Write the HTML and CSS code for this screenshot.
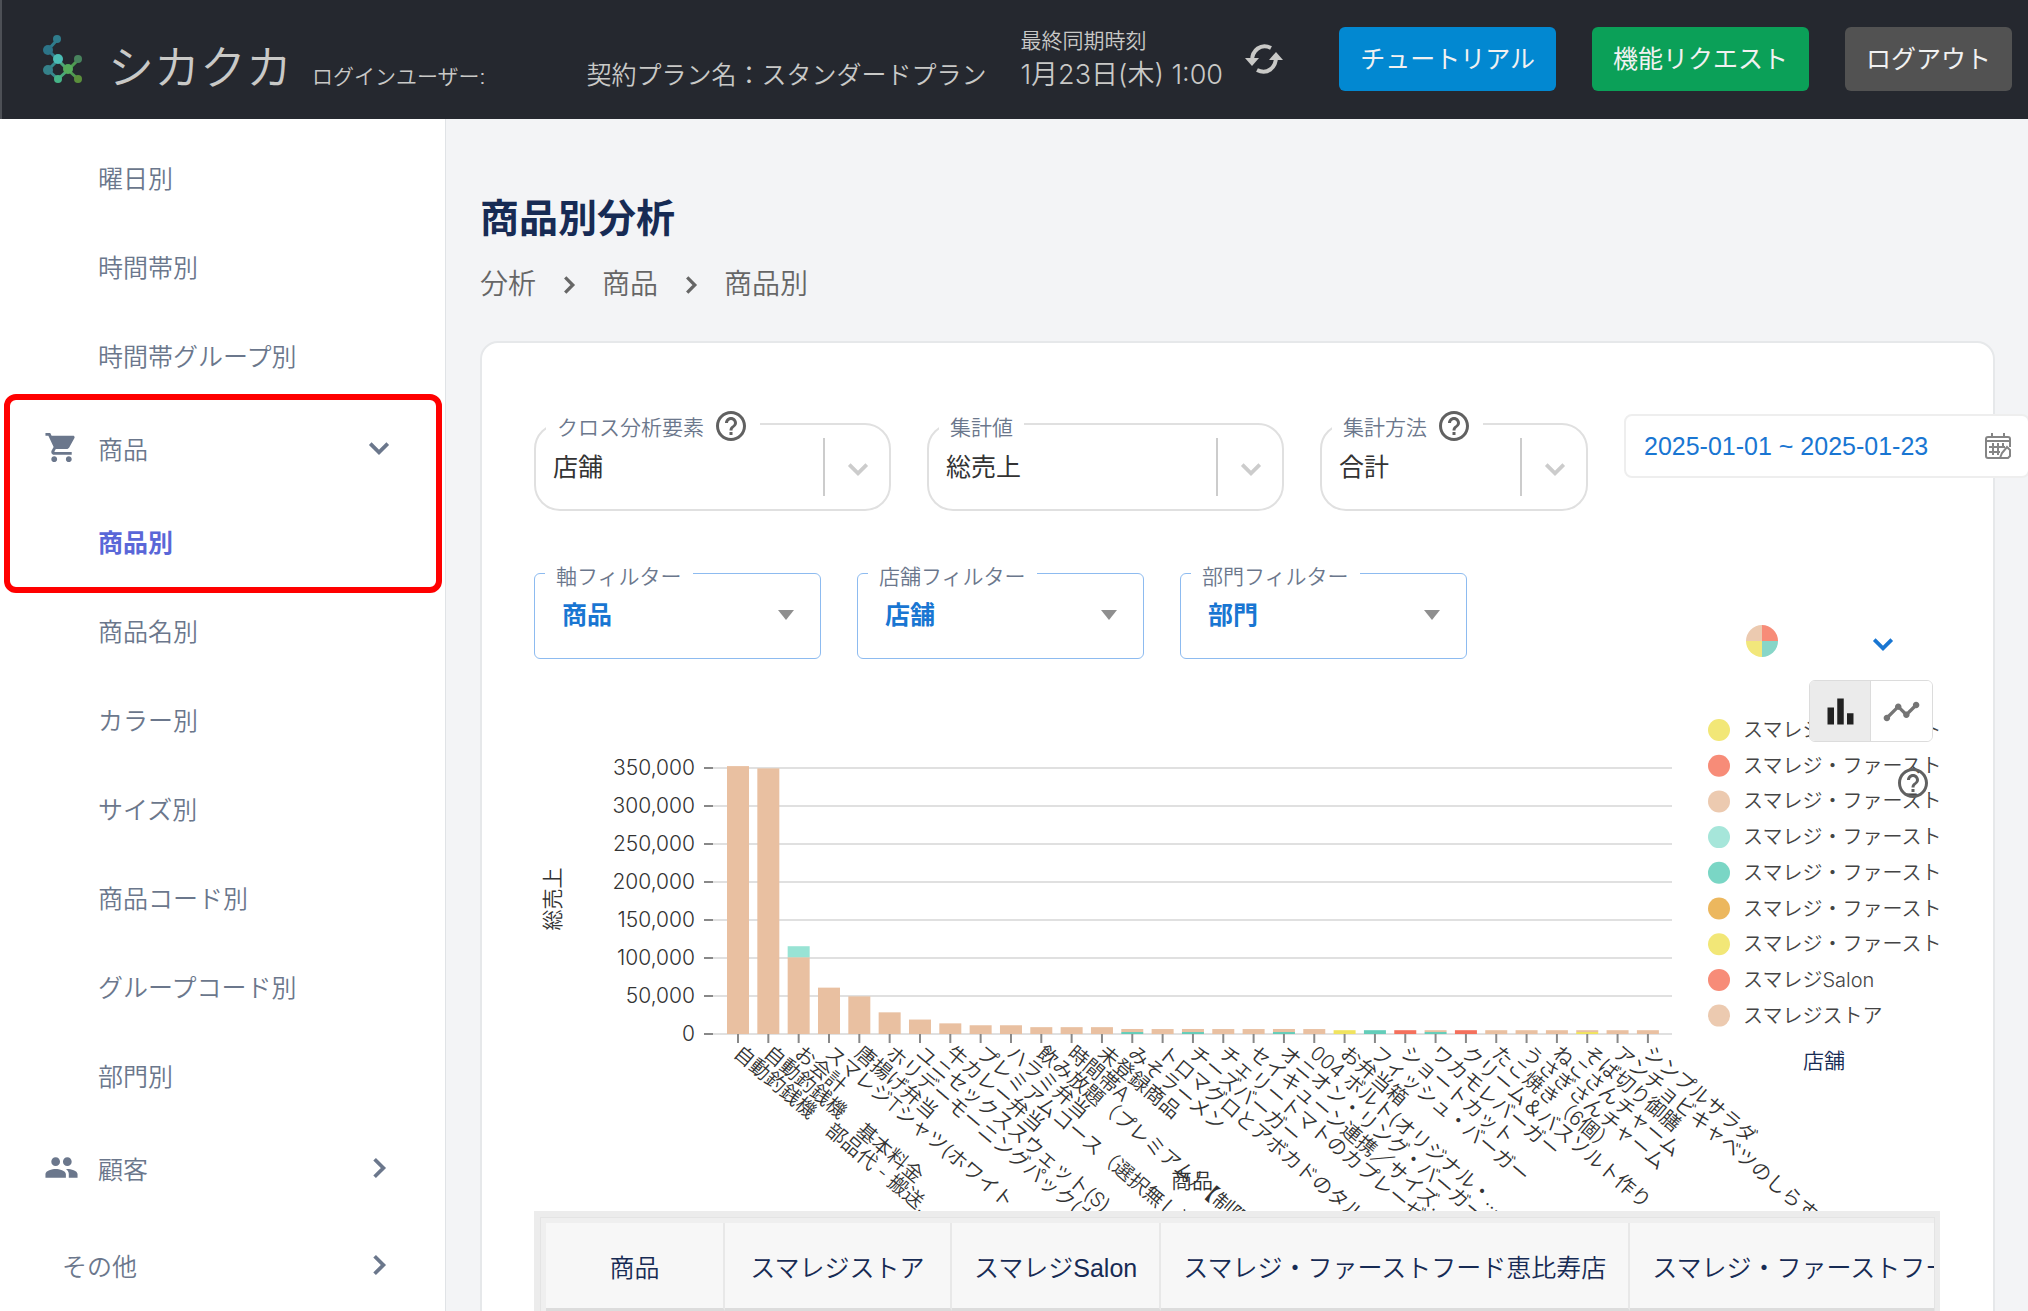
FILE: index.html
```html
<!DOCTYPE html>
<html lang="ja">
<head>
    <meta charset="UTF-8" />
    <meta name="viewport" content="width=device-width, initial-scale=1.0" />
    <title>商品別分析 | シカクカ</title>
    <link rel="stylesheet" href="styles.css">
</head>
<body>
    <!-- Shared icons -->
    <svg class="icon-defs" width="0" height="0" aria-hidden="true">
        <symbol id="icon-help" viewBox="0 0 24 24">
            <path d="M11 18h2v-2h-2v2zm1-16C6.48 2 2 6.48 2 12s4.48 10 10 10 10-4.48 10-10S17.52 2 12 2zm0 18c-4.41 0-8-3.59-8-8s3.59-8 8-8 8 3.59 8 8-3.59 8-8 8zm0-14c-2.21 0-4 1.79-4 4h2c0-1.1.9-2 2-2s2 .9 2 2c0 2-3 1.75-3 5h2c0-2.25 3-2.5 3-5 0-2.21-1.79-4-4-4z"/>
        </symbol>
        <symbol id="icon-down" viewBox="0 0 24 24">
            <path d="M5 8.5l7 7 7-7" fill="none" stroke="currentColor" stroke-width="3"/>
        </symbol>
        <symbol id="icon-right" viewBox="0 0 24 24">
            <path d="M8.5 5l7 7-7 7" fill="none" stroke="currentColor" stroke-width="3"/>
        </symbol>
    </svg>

    <header class="header">
        <div class="header-info">
            <a class="brand" href="#">
                <svg class="brand-logo" viewBox="0 0 40 50" aria-hidden="true">
                    <g fill="none" stroke-width="3">
                        <path d="M15 6L6 16l10 10" stroke="#2f7c8c"/>
                        <path d="M16 26L6 36l10 9" stroke="#378a8d"/>
                        <path d="M16 26l10 10-10 9" stroke="#4aa779"/>
                        <path d="M36 26L26 36l10 9" stroke="#4f9a52"/>
                    </g>
                    <circle cx="15" cy="5" r="4" fill="#2f7c8c"/>
                    <circle cx="6" cy="16" r="5" fill="#2c7488"/>
                    <circle cx="16" cy="25" r="5" fill="#4bbdb5"/>
                    <circle cx="6" cy="36" r="5" fill="#35818a"/>
                    <circle cx="26" cy="35" r="5" fill="#55ab5b"/>
                    <circle cx="36" cy="25" r="4" fill="#48835d"/>
                    <circle cx="36" cy="45" r="4" fill="#5a8f3c"/>
                    <circle cx="16" cy="45" r="4" fill="#46b487"/>
                </svg>
                <span>シカクカ</span>
            </a>
            <p class="login-user">ログインユーザー:</p>
            <p class="plan">契約プラン名：スタンダードプラン</p>
            <div class="sync">
                <p class="sync-label">最終同期時刻</p>
                <p class="sync-time">1月23日(木) 1:00</p>
            </div>
        </div>
        <button class="sync-btn" type="button" aria-label="同期">
            <svg width="38" height="30" viewBox="0 0 38 30" aria-hidden="true">
                <path d="M26 4C16-1 7 6 7 17" fill="none" stroke="currentColor" stroke-width="4"/>
                <path d="M0 14h14l-7 8z" fill="currentColor"/>
                <path d="M12 26c10 5 19-2 19-13" fill="none" stroke="currentColor" stroke-width="4"/>
                <path d="M24 16h14l-7-8z" fill="currentColor"/>
            </svg>
        </button>
        <div class="header-buttons">
            <button class="header-btn tutorial" type="button">チュートリアル</button>
            <button class="header-btn request" type="button">機能リクエスト</button>
            <button class="header-btn logout" type="button">ログアウト</button>
        </div>
    </header>

    <div class="layout">
        <nav class="sidebar">
            <a class="nav-item" href="#">曜日別</a>
            <a class="nav-item" href="#">時間帯別</a>
            <a class="nav-item" href="#">時間帯グループ別</a>
            <div class="nav-highlight">
                <a class="nav-group" href="#">
                    <svg class="nav-icon" viewBox="0 0 24 24" aria-hidden="true"><path d="M7 18c-1.1 0-1.99.9-1.99 2S5.9 22 7 22s2-.9 2-2-.9-2-2-2zM1 2v2h2l3.6 7.59-1.35 2.45c-.16.28-.25.61-.25.96 0 1.1.9 2 2 2h12v-2H7.42c-.14 0-.25-.11-.25-.25l.03-.12.9-1.63h7.45c.75 0 1.41-.41 1.75-1.03l3.58-6.49c.08-.14.12-.31.12-.48 0-.55-.45-1-1-1H5.21l-.94-2H1zm16 16c-1.1 0-1.99.9-1.99 2s.89 2 1.99 2 2-.9 2-2-.9-2-2-2z"/></svg>
                    <span>商品</span>
                    <svg class="nav-arrow"><use href="#icon-down"/></svg>
                </a>
                <a class="nav-item active" href="#">商品別</a>
            </div>
            <a class="nav-item" href="#">商品名別</a>
            <a class="nav-item" href="#">カラー別</a>
            <a class="nav-item" href="#">サイズ別</a>
            <a class="nav-item" href="#">商品コード別</a>
            <a class="nav-item" href="#">グループコード別</a>
            <a class="nav-item" href="#">部門別</a>
            <a class="nav-group" href="#">
                <svg class="nav-icon" viewBox="0 0 24 24" aria-hidden="true"><path d="M16 11c1.66 0 2.99-1.34 2.99-3S17.66 5 16 5c-1.66 0-3 1.34-3 3s1.34 3 3 3zm-8 0c1.66 0 2.99-1.34 2.99-3S9.66 5 8 5C6.34 5 5 6.34 5 8s1.34 3 3 3zm0 2c-2.33 0-7 1.17-7 3.5V19h14v-2.5c0-2.33-4.67-3.5-7-3.5zm8 0c-.29 0-.62.02-.97.05 1.16.84 1.97 1.97 1.97 3.45V19h6v-2.5c0-2.33-4.67-3.5-7-3.5z"/></svg>
                <span>顧客</span>
                <svg class="nav-arrow"><use href="#icon-right"/></svg>
            </a>
            <a class="nav-group no-icon" href="#">
                <span>その他</span>
                <svg class="nav-arrow"><use href="#icon-right"/></svg>
            </a>
        </nav>

        <main class="main">
            <h1 class="page-title">商品別分析</h1>
            <div class="breadcrumb">
                <a href="#">分析</a>
                <svg class="crumb-arrow"><use href="#icon-right"/></svg>
                <a href="#">商品</a>
                <svg class="crumb-arrow"><use href="#icon-right"/></svg>
                <span>商品別</span>
            </div>

            <section class="card">
                <div class="select-row">
                    <div class="field">
                        <label class="field-label" for="cross">クロス分析要素 <svg class="help"><use href="#icon-help"/></svg></label>
                        <select id="cross"><option>店舗</option></select>
                        <svg class="field-arrow"><use href="#icon-down"/></svg>
                    </div>
                    <div class="field">
                        <label class="field-label" for="value">集計値</label>
                        <select id="value"><option>総売上</option></select>
                        <svg class="field-arrow"><use href="#icon-down"/></svg>
                    </div>
                    <div class="field narrow">
                        <label class="field-label" for="method">集計方法 <svg class="help"><use href="#icon-help"/></svg></label>
                        <select id="method"><option>合計</option></select>
                        <svg class="field-arrow"><use href="#icon-down"/></svg>
                    </div>
                    <div class="date-field">
                        <input type="text" aria-label="期間" value="2025-01-01 ~ 2025-01-23">
                        <svg class="calendar" viewBox="0 0 28 28" aria-hidden="true">
                            <path d="M16 26H4a2 2 0 0 1-2-2V7a2 2 0 0 1 2-2h20a2 2 0 0 1 2 2v8M2 9h24M8 1v5M20 1v5"/>
                            <path d="M5 15h16M5 20h11M9 11v12M14 11v12M19 11v5"/>
                            <path d="M16 26l2-5 5-6 3 3v6l-2 2z"/>
                        </svg>
                    </div>
                </div>

                <div class="filter-row">
                    <div class="filter">
                        <label class="filter-label" for="axis-filter">軸フィルター</label>
                        <select id="axis-filter"><option>商品</option></select>
                    </div>
                    <div class="filter">
                        <label class="filter-label" for="store-filter">店舗フィルター</label>
                        <select id="store-filter"><option>店舗</option></select>
                    </div>
                    <div class="filter">
                        <label class="filter-label" for="dept-filter">部門フィルター</label>
                        <select id="dept-filter"><option>部門</option></select>
                    </div>
                    <button class="palette-btn" type="button" aria-label="配色">
                        <svg width="32" height="32" viewBox="0 0 32 32" aria-hidden="true">
                            <path d="M16 16V0a16 16 0 0 1 16 16z" fill="#f78c78"/>
                            <path d="M16 16h16a16 16 0 0 1-16 16z" fill="#87d6c8"/>
                            <path d="M16 16v16A16 16 0 0 1 0 16z" fill="#f2e77b"/>
                            <path d="M16 16H0A16 16 0 0 1 16 0z" fill="#eccab0"/>
                        </svg>
                        <svg class="palette-arrow"><use href="#icon-down"/></svg>
                    </button>
                </div>

                <div class="chart">
                    <svg id="chart-svg" viewBox="0 0 1406 531" role="img" aria-label="商品別の総売上"></svg>
                    <div class="chart-toggle">
                        <button class="toggle-btn selected" type="button" aria-label="棒グラフ">
                            <svg viewBox="0 0 24 24" aria-hidden="true"><path d="M4 9.500h4V20H4zM10 4h4v16h-4zM16 13h4v7h-4z"/></svg>
                        </button>
                        <button class="toggle-btn" type="button" aria-label="折れ線グラフ">
                            <svg viewBox="0 0 24 24" aria-hidden="true"><path d="M23 8c0 1.100-.9 2-2 2-.18 0-.35-.02-.51-.07l-3.560 3.550c.05.16.07.34.07.52 0 1.100-.9 2-2 2s-2-.9-2-2c0-.18.02-.36.07-.52l-2.550-2.550c-.16.05-.34.07-.52.07s-.36-.02-.52-.07l-4.550 4.560c.05.16.07.33.07.51 0 1.100-.9 2-2 2s-2-.9-2-2 .9-2 2-2c.18 0 .35.02.51.07l4.560-4.550C8.020 9.360 8 9.180 8 9c0-1.100.9-2 2-2s2 .9 2 2c0 .18-.02.36-.07.52l2.550 2.550c.16-.05.34-.07.52-.07s.36.02.52.07l3.550-3.560C19.020 8.350 19 8.180 19 8c0-1.100.9-2 2-2s2 .9 2 2z"/></svg>
                        </button>
                    </div>
                    <svg class="help chart-help"><use href="#icon-help"/></svg>
                </div>

                <div class="table-wrap">
                    <div class="table-scroll">
                        <table class="data-table">
                            <thead>
                                <tr>
                                    <th class="col-name">商品</th>
                                    <th class="col-store">スマレジストア</th>
                                    <th>スマレジSalon</th>
                                    <th>スマレジ・ファーストフード恵比寿店</th>
                                    <th>スマレジ・ファーストフード渋谷店</th>
                                </tr>
                            </thead>
                        </table>
                    </div>
                </div>
            </section>
        </main>
    </div>

    <script src="chart.js"></script>
</body>
</html>
```

FILE: styles.css
```css
* {
    box-sizing: border-box;
}
body {
    margin: 0;
    height: 100vh;
    display: flex;
    flex-direction: column;
    overflow: hidden;
    font-family: "Liberation Sans", "Noto Sans CJK JP", sans-serif;
    font-size: 25px;
    color: #172b54;
    background: #f3f4f6;
}
p, h1 {
    margin: 0;
}
a {
    color: inherit;
    text-decoration: none;
}
button, select, input {
    font: inherit;
    cursor: pointer;
}
svg {
    flex-shrink: 0;
    fill: currentColor;
}
.icon-defs {
    position: absolute;
}

/* Header */
.header {
    flex-shrink: 0;
    height: 119px;
    display: flex;
    align-items: center;
    padding: 0 16px 2px 40px;
    border-left: 2px solid #4d5056;
    background: #25282f;
    color: #c9c9c7;
    white-space: nowrap;
}
.header-info {
    display: flex;
    align-items: last baseline;
    font-weight: 350;
    line-height: 34px;
}
.brand {
    display: flex;
    align-items: center;
    gap: 26px;
    font-size: 46px;
}
.brand-logo {
    width: 40px;
    height: 50px;
    margin-top: -18px;
}
.login-user {
    margin-left: 20px;
    font-size: 21px;
}
.plan {
    margin-left: 101px;
}
.sync {
    margin-left: 34px;
}
.sync-label {
    font-size: 21px;
}
.sync-time {
    font-family: Inter, "Noto Sans CJK JP", sans-serif;
    font-size: 27px;
}
.sync-btn {
    margin-left: 22px;
    padding: 0;
    border: 0;
    background: none;
    color: #c9c9c7;
    display: flex;
}
.header-buttons {
    margin-left: auto;
    display: flex;
    gap: 36px;
}
.header-btn {
    height: 64px;
    padding: 0 21px 4px;
    border: 0;
    border-radius: 6px;
    color: #f1f1f1;
}
.tutorial {
    background: #0288d1;
}
.request {
    background: #0ba058;
}
.logout {
    background: #525252;
}

.layout {
    flex: 1;
    min-height: 0;
    display: flex;
}

/* Sidebar */
.sidebar {
    width: 446px;
    flex-shrink: 0;
    padding-top: 13px;
    overflow: hidden;
    border-right: 1px solid #e0e3e6;
    background: #fff;
    color: #6b778c;
    font-weight: 350;
}
.nav-item {
    height: 89px;
    display: flex;
    align-items: center;
    padding-left: 98px;
}
.nav-item.active {
    color: #5a67d8;
    font-weight: 700;
}
.nav-group {
    height: 97px;
    display: flex;
    align-items: center;
    padding: 0 51px 0 44px;
}
.nav-icon {
    width: 35px;
    height: 35px;
    margin-right: 19px;
}
.nav-group.no-icon {
    padding-left: 62px;
}
.nav-arrow {
    width: 30px;
    height: 30px;
    margin-left: auto;
}
.nav-highlight {
    position: relative;
}
.nav-highlight::after {
    content: "";
    position: absolute;
    inset: -5px 3px -8px 4px;
    border: 6px solid #f00;
    border-radius: 12px;
    pointer-events: none;
}

/* Main */
.main {
    flex: 1;
    min-width: 0;
    overflow: hidden;
    padding: 75px 33px 0 34px;
}
.page-title {
    font-size: 39px;
    line-height: 50px;
    font-weight: 700;
}
.breadcrumb {
    display: flex;
    align-items: center;
    gap: 18px;
    margin: 21px 0 36px;
    font-size: 28px;
    font-weight: 350;
    line-height: 40px;
    color: #666;
}
.crumb-arrow {
    width: 30px;
    height: 26px;
}
.card {
    padding: 71px 53px 71px 52px;
    border: 2px solid #e6e8ea;
    border-radius: 18px;
    background: #fff;
}

.select-row {
    display: flex;
    align-items: flex-start;
    gap: 36px;
}
.field {
    position: relative;
    flex-shrink: 0;
    width: 357px;
    height: 88px;
    margin-top: 9px;
    border: 2px solid #e0e0e0;
    border-radius: 26px;
}
.field.narrow {
    width: 268px;
}
.field-label, .filter-label {
    position: absolute;
    top: -11px;
    left: 10px;
    display: flex;
    align-items: center;
    gap: 9px;
    height: 24px;
    padding: 0 11px;
    background: #fff;
    font-size: 21px;
    font-weight: 350;
    color: #6b778c;
}
.help {
    width: 36px;
    height: 36px;
    color: #616161;
}
.field select {
    width: 100%;
    height: 100%;
    padding: 0 66px 0 17px;
    border: 0;
    background: none;
    appearance: none;
    color: #333;
}
.field::after {
    content: "";
    position: absolute;
    top: 13px;
    right: 64px;
    width: 2px;
    height: 58px;
    background: #ccc;
}
.field-arrow {
    position: absolute;
    top: 29px;
    right: 16px;
    width: 30px;
    height: 30px;
    color: #ccc;
    pointer-events: none;
}
.date-field {
    flex-shrink: 0;
    width: 406px;
    height: 64px;
    display: flex;
    align-items: center;
    justify-content: space-between;
    padding: 0 16px 0 18px;
    border: 2px solid #eee;
    border-radius: 8px;
    background: #fff;
    color: #858585;
}
.date-field input {
    width: 300px;
    padding: 0;
    border: 0;
    background: none;
    color: #1976d2;
}
.calendar {
    width: 28px;
    height: 28px;
    fill: none;
    stroke: currentColor;
    stroke-width: 2;
}

.filter-row {
    display: flex;
    gap: 36px;
    margin-top: 62px;
}
.filter {
    position: relative;
    width: 287px;
    height: 86px;
    border: 1px solid #8dbbf0;
    border-radius: 6px;
}
.filter::after {
    content: "";
    position: absolute;
    top: 36px;
    right: 26px;
    border: 8px solid transparent;
    border-top: 10px solid #8f8f8f;
    border-bottom: 0;
    pointer-events: none;
}
.filter select {
    width: 100%;
    height: 82px;
    padding: 0 60px 0 27px;
    border: 0;
    background: none;
    appearance: none;
    color: #1976d2;
    font-weight: 700;
}
.palette-btn {
    display: flex;
    align-items: center;
    gap: 90px;
    margin-left: auto;
    padding: 50px 42px 0 0;
    border: 0;
    background: none;
    color: #1976d2;
}
.palette-arrow {
    width: 30px;
    height: 30px;
    margin-top: 6px;
}

/* Chart */
.chart {
    position: relative;
    margin-top: 21px;
}
#chart-svg {
    display: block;
    width: 100%;
    font-family: Inter, "Noto Sans CJK JP", sans-serif;
    font-weight: 350;
}
.grid-line {
    stroke: #e0e0e0;
    stroke-width: 2;
}
.tick {
    stroke: #888;
    stroke-width: 2;
}
.axis-value {
    font-size: 21px;
    fill: #333;
}
.axis-label {
    font-size: 20px;
    fill: #333;
}
.legend-label {
    font-size: 20px;
    fill: #444;
}
.axis-title {
    font-size: 21px;
    fill: #333;
}
.legend-title {
    font-size: 21px;
    fill: #172b54;
}
.chart-toggle {
    position: absolute;
    top: 0;
    right: 7px;
    display: flex;
    border: 1px solid #dcdcdc;
    border-radius: 6px;
    overflow: hidden;
    background: #fff;
}
.toggle-btn {
    width: 61px;
    height: 60px;
    padding: 11px;
    border: 0;
    background: #fff;
    color: #757575;
}
.toggle-btn.selected {
    background: #ebebeb;
    border-right: 1px solid #dcdcdc;
    color: #222;
}
.toggle-btn svg {
    display: block;
    width: 39px;
    height: 39px;
}
.chart-help {
    position: absolute;
    top: 85px;
    right: 9px;
}

/* Table */
.table-wrap {
    padding: 6px 5px 6px 6px;
    background: #ececec;
}
.table-scroll {
    overflow: hidden;
    border: 1px solid #e4e4e4;
}
.data-table {
    border: 5px solid #efefef;
    border-right: 0;
    border-spacing: 0;
    background: #f7f7f7;
}
.data-table th {
    height: 88px;
    padding: 0 22px;
    border-right: 2px solid #e8e8e8;
    border-bottom: 3px solid #dcdcdc;
    font-weight: 350;
    white-space: nowrap;
}
.data-table .col-name {
    min-width: 179px;
}
.data-table .col-store {
    min-width: 227px;
}
```

FILE: chart.js
```js
const COLORS = {
    tan: '#e9c0a1',
    mint: '#98e3d4',
    teal: '#63cdb9',
    yellow: '#f0e35f',
    red: '#f4705c'
};

// [label, [color, value], ...] stacked from the bottom
const ITEMS = [
    ['自動釣銭機　部品代 - 搬送…', ['tan', 352500]],
    ['自動釣銭機　基本料金', ['tan', 349500]],
    ['お会計', ['tan', 101000], ['mint', 14500]],
    ['スマレジTシャツ(ホワイト', ['tan', 61000]],
    ['唐揚げ弁当', ['tan', 49500]],
    ['ホリデーモーニングパック(カ', ['tan', 28500]],
    ['ユニセックススウェット(S)', ['tan', 19000]],
    ['牛カレー弁当', ['tan', 14000]],
    ['プレミアムコース（選択無し）', ['tan', 11500]],
    ['ハラミ弁当', ['tan', 11500]],
    ['飲み放題（プレミアム）【制限', ['tan', 9000]],
    ['時間帯A', ['tan', 9000]],
    ['未登録商品', ['tan', 9000]],
    ['みそラーメン', ['teal', 2600], ['tan', 4000]],
    ['トロマグロとアボカドのタル', ['tan', 6500]],
    ['チーズバーガー', ['teal', 2600], ['tan', 4000]],
    ['チェリートマトのカプレーゼ', ['tan', 6500]],
    ['セイキューン連携／サイズ…', ['tan', 6500]],
    ['オニオン・リング・バーガー', ['teal', 2600], ['tan', 4000]],
    ['004 ボルト(オリジナル・…', ['tan', 6500]],
    ['お弁当箱', ['yellow', 5000]],
    ['フィッシュ・バーガー', ['teal', 5000]],
    ['ショートカット', ['red', 5000]],
    ['ワカモレバーガー', ['teal', 2600], ['tan', 2400]],
    ['クリーム＆バスソルト作り', ['red', 5000]],
    ['たこ焼き（6個）', ['tan', 5000]],
    ['うさぎさんチャーム', ['tan', 5000]],
    ['ねこさんチャーム', ['tan', 5000]],
    ['そば切り御膳', ['yellow', 2600], ['tan', 2400]],
    ['アンチョビキャベツのしらす', ['tan', 5000]],
    ['シンプルサラダ', ['tan', 5000]]
];

const LEGEND = [
    ['#f2e777', 'スマレジ・ファーストフード'],
    ['#f78c78', 'スマレジ・ファーストフード'],
    ['#eccab0', 'スマレジ・ファーストフード'],
    ['#a6e6da', 'スマレジ・ファーストフード'],
    ['#7ad6c5', 'スマレジ・ファーストフード'],
    ['#ecb75e', 'スマレジ・ファーストフード'],
    ['#f2e777', 'スマレジ・ファーストフード'],
    ['#f78c78', 'スマレジSalon'],
    ['#eccab0', 'スマレジストア']
];

const svg = document.getElementById('chart-svg');
const BASE = 354;
const LEFT = 178;
const RIGHT = 1138;
const STEP = 30.33;
const BAR = 22;

function add(tag, attrs, text) {
    const el = document.createElementNS('http://www.w3.org/2000/svg', tag);
    for (const key in attrs) el.setAttribute(key, attrs[key]);
    if (text) el.textContent = text;
    svg.appendChild(el);
}

function scaleY(value) {
    return BASE - value / 350000 * 266;
}

// y axis
for (let v = 0; v <= 350000; v += 50000) {
    const y = Math.round(scaleY(v));
    add('line', { class: 'grid-line', x1: LEFT, x2: RIGHT, y1: y, y2: y });
    add('line', { class: 'tick', x1: 170, x2: 179, y1: y, y2: y });
    add('text', { class: 'axis-value', x: 161, y: y + 7, 'text-anchor': 'end' }, v.toLocaleString('en-US'));
}
add('text', { class: 'axis-title', transform: 'translate(26 219) rotate(-90)', 'text-anchor': 'middle' }, '総売上');

// bars and x axis
ITEMS.forEach(([label, ...parts], i) => {
    const x = 204 + i * STEP;
    let sum = 0;
    parts.forEach(([color, value]) => {
        const bottom = scaleY(sum);
        sum += value;
        const top = scaleY(sum);
        add('rect', { x: x - BAR / 2, y: top, width: BAR, height: bottom - top, fill: COLORS[color] });
    });
    add('line', { class: 'tick', x1: x, x2: x, y1: BASE, y2: BASE + 9 });
    add('text', { class: 'axis-label', transform: `translate(${x - 1} ${BASE + 16}) rotate(40)`, y: 7 }, label);
});
add('text', { class: 'axis-title', x: 658, y: 508, 'text-anchor': 'middle' }, '商品');

// legend
LEGEND.forEach(([color, label], i) => {
    const y = 50 + i * 35.7;
    add('circle', { cx: 1185, cy: y, r: 11, fill: color });
    add('text', { class: 'legend-label', x: 1209, y: y + 7 }, label);
});
add('text', { class: 'legend-title', x: 1290, y: 388, 'text-anchor': 'middle' }, '店舗');
```
